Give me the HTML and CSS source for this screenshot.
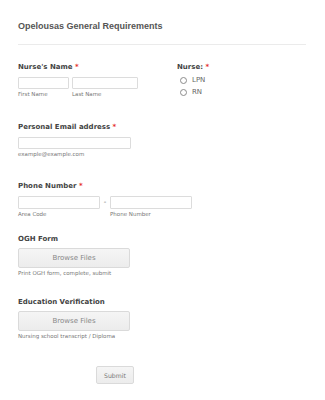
FILE: index.html
```html
<!DOCTYPE html>
<html lang="en">
<head>
    <meta charset="UTF-8">
    <meta name="viewport" content="width=device-width, initial-scale=1.0">
    <title>Opelousas General Requirements</title>
    <link rel="stylesheet" href="styles.css">
</head>
<body>
    <form class="form-container" onsubmit="return false;">
        <h2 class="form-title">Opelousas General Requirements</h2>
        <hr class="form-divider">

        <!-- Name + nurse type -->
        <div class="form-row">
            <div class="form-field name-field">
                <label class="field-label">Nurse's Name <span class="required">*</span></label>
                <div class="input-group">
                    <div class="sub-field">
                        <input type="text" class="text-input first-name">
                        <span class="sub-label">First Name</span>
                    </div>
                    <div class="sub-field">
                        <input type="text" class="text-input last-name">
                        <span class="sub-label">Last Name</span>
                    </div>
                </div>
            </div>
            <div class="form-field nurse-field">
                <label class="field-label">Nurse: <span class="required">*</span></label>
                <label class="radio-option"><input type="radio" name="nurse"><span class="radio-mark"></span>LPN</label>
                <label class="radio-option"><input type="radio" name="nurse"><span class="radio-mark"></span>RN</label>
            </div>
        </div>

        <!-- Email -->
        <div class="form-field email-field">
            <label class="field-label">Personal Email address <span class="required">*</span></label>
            <input type="text" class="text-input email-input">
            <span class="sub-label">example@example.com</span>
        </div>

        <!-- Phone -->
        <div class="form-field phone-field">
            <label class="field-label">Phone Number <span class="required">*</span></label>
            <div class="input-group">
                <div class="sub-field">
                    <input type="text" class="text-input phone-input">
                    <span class="sub-label">Area Code</span>
                </div>
                <span class="phone-dash">-</span>
                <div class="sub-field">
                    <input type="text" class="text-input phone-input">
                    <span class="sub-label">Phone Number</span>
                </div>
            </div>
        </div>

        <!-- Uploads -->
        <div class="form-field upload-field ogh-field">
            <label class="field-label">OGH Form</label>
            <button type="button" class="browse-button">Browse Files</button>
            <span class="sub-label">Print OGH form, complete, submit</span>
        </div>

        <div class="form-field upload-field edu-field">
            <label class="field-label">Education Verification</label>
            <button type="button" class="browse-button">Browse Files</button>
            <span class="sub-label">Nursing school transcript / Diploma</span>
        </div>

        <div class="submit-row">
            <button type="submit" class="submit-button">Submit</button>
        </div>
    </form>
</body>
</html>
```

FILE: styles.css
```css
/* Base Styles */
* {
    margin: 0;
    padding: 0;
    box-sizing: border-box;
}

body {
    font-family: 'DejaVu Sans', Verdana, sans-serif;
    background-color: #fff;
    color: #444;
}

/* Form Container */
.form-container {
    padding: 20px 19px 0 18px;
}

.form-title {
    font-family: 'Liberation Sans', Arial, sans-serif;
    font-size: 9px;
    line-height: 12px;
    font-weight: 700;
    color: #555;
}

.form-divider {
    border: none;
    border-top: 1px solid #ebebeb;
    margin: 12px 0 18px;
}

/* Fields */
.form-row {
    display: flex;
}

.name-field {
    width: 159px;
}

.field-label {
    display: block;
    font-size: 7px;
    line-height: 9px;
    font-weight: 700;
    color: #444;
    margin-bottom: 5px;
}

.nurse-field .field-label {
    margin-bottom: 2px;
}

.required {
    color: #e5302c;
}

.input-group {
    display: flex;
    align-items: flex-start;
    gap: 3px;
}

.sub-field {
    display: flex;
    flex-direction: column;
}

.text-input {
    display: block;
    height: 12px;
    border: 1px solid #dcdcdc;
    border-radius: 1px;
    background-color: #fff;
}

.first-name {
    width: 51px;
}

.last-name {
    width: 66px;
}

.sub-label {
    display: block;
    font-size: 5.5px;
    line-height: 8px;
    color: #777;
    margin-top: 1px;
}

/* Radios */
.radio-option {
    display: flex;
    align-items: center;
    height: 12px;
    font-size: 7px;
    color: #666;
    padding-left: 3px;
}

.radio-option input {
    display: none;
}

.radio-mark {
    width: 7px;
    height: 7px;
    border: 1px solid #8c8c8c;
    border-radius: 50%;
    margin-right: 5px;
}

.email-field {
    margin-top: 25px;
}

.email-input {
    width: 113px;
}

.phone-field {
    margin-top: 24px;
}

.phone-input {
    width: 82px;
    height: 13px;
}

.phone-dash {
    font-size: 7px;
    line-height: 13px;
    color: #666;
    width: 4px;
    text-align: center;
}

/* Upload buttons */
.ogh-field {
    margin-top: 17px;
}

.edu-field {
    margin-top: 21px;
}

.upload-field .field-label {
    margin-bottom: 4px;
}

.browse-button {
    display: block;
    width: 112px;
    height: 20px;
    font-family: 'DejaVu Sans', Verdana, sans-serif;
    font-size: 7px;
    color: #888;
    background: linear-gradient(#f5f5f5, #ececec);
    border: 1px solid #dadada;
    border-radius: 2px;
}

/* Submit */
.submit-row {
    display: flex;
    margin-top: 26px;
    padding-left: 78px;
}

.submit-button {
    width: 38px;
    height: 18px;
    font-family: 'DejaVu Sans', Verdana, sans-serif;
    font-size: 6.2px;
    color: #777;
    background: linear-gradient(#f5f5f5, #ececec);
    border: 1px solid #dadada;
    border-radius: 2px;
}
```
